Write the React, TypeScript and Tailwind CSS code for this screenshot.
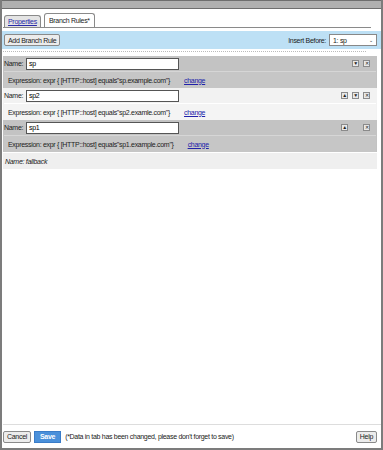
import React from "react";

type Rule = {name: string; host: string; up: boolean; down: boolean};

const rules: Rule[] = [
    {name: "sp", host: "sp.example.com", up: false, down: true},
    {name: "sp2", host: "sp2.examle.com", up: true, down: true},
    {name: "sp1", host: "sp1.example.com", up: true, down: false},
];

function IconBtn({glyph}: {glyph: string}) {
    return (
        <span className="flex h-[7px] w-[7px] items-center justify-center border border-[#8a8a8a] bg-[#e8e8e8] text-[5px] leading-none text-[#222]">
            {glyph}
        </span>
    );
}

function RuleBlock({rule, dark}: {rule: Rule; dark: boolean}) {
    const bg = dark ? "bg-[#c3c3c3]" : "bg-[#f2f2f2]";
    const exprBg = dark ? "bg-[#c6c6c6]" : "bg-[#f4f4f4]";
    return (
        <div className={bg}>
            <div className="flex h-[15px] items-center pl-[1px] pr-[7px]">
                <span className="w-[22px] text-[#222]">Name:</span>
                <div className="flex h-[12px] w-[153px] items-center border border-[#555] bg-white pl-[2px]">{rule.name}</div>
                <div className="ml-auto flex items-center gap-[4px]">
                    <span className="w-[7px]">{rule.up && <IconBtn glyph="▲"/>}</span>
                    <span className="w-[7px]">{rule.down && <IconBtn glyph="▼"/>}</span>
                    <IconBtn glyph="✕"/>
                </div>
            </div>
            <div className={`mx-[1px] flex h-[17px] items-center border-t ${dark ? "border-[#d6d6d6]" : "border-white"} ${exprBg} pl-[4px]`}>
                <span className="text-[#222]">Expression: expr {"{"} [HTTP::host] equals"{rule.host}"{"}"}</span>
                <a className="ml-[14px] text-[#2222aa] underline">change</a>
            </div>
        </div>
    );
}

export default function App() {
    return (
        <div className="flex h-[450px] w-[383px] flex-col border-x-2 border-b-2 border-[#7c7c7c] bg-white text-[7px] leading-none tracking-[-0.3px]" style={{fontFamily: '"Liberation Sans", Arial, sans-serif'}}>
            {/* barre de titre */}
            <div className="h-[9px] border-y border-[#6e6e6e] bg-[#b0b0b0]"/>

            {/* onglets */}
            <div className="ml-[1px] mr-[10px] mt-[5px] flex h-[14px] items-end border-b border-[#8a8a8a]">
                <div className="ml-[1px] flex h-[12px] items-center rounded-t-[3px] border border-b-0 border-[#8a8a8a] bg-[#e4e4e4] px-[3px] text-[#2a2aa8] underline">Properties</div>
                <div className="ml-[3px] flex h-[14px] items-center rounded-t-[3px] border border-b-0 border-[#8a8a8a] bg-white px-[4px] text-[#222]">Branch Rules*</div>
            </div>

            {/* barre d'outils */}
            <div className="mt-[3px] flex h-[18px] items-center bg-[#bde0f5] pl-[2px] pr-[4px]">
                <button className="flex h-[12px] items-center rounded-[2px] border border-[#8a8a8a] bg-[#ececec] px-[3px] text-[#222]">Add Branch Rule</button>
                <span className="ml-auto mr-[3px] text-[#222]">Insert Before:</span>
                <div className="flex h-[12px] w-[48px] items-center justify-between border border-[#888] bg-white pl-[3px] pr-[3px] text-[#222]">
                    <span>1: sp</span>
                    <span className="text-[5px]">⌄</span>
                </div>
            </div>
            <div className="ml-[1px] mr-[15px] mt-[2px] border-t border-dotted border-[#bbb]"/>

            {/* règles */}
            <div className="ml-[1px] mr-[4px] mt-[4px] flex flex-col">
                {rules.map((rule, index) => (
                    <RuleBlock key={rule.name} rule={rule} dark={index % 2 === 0}/>
                ))}
                <div className="mt-[1px] flex h-[16px] items-center bg-[#efefef] pl-[2px] italic text-[#222]">Name: fallback</div>
            </div>

            <div className="flex-1"/>

            {/* pied de page */}
            <div className="ml-[1px] flex h-[24px] items-center border-t border-[#ddd] pl-0 pr-[4px]">
                <button className="flex h-[12px] items-center rounded-[2px] border border-[#8a8a8a] bg-[#ececec] px-[3px] text-[#222]">Cancel</button>
                <button className="ml-[3px] flex h-[12px] items-center border border-[#3a7cc8] bg-[#4a90da] px-[5px] font-bold text-white">Save</button>
                <span className="ml-[4px] text-[#222]">(*Data in tab has been changed, please don't forget to save)</span>
                <button className="ml-auto flex h-[12px] items-center rounded-[2px] border border-[#8a8a8a] bg-[#ececec] px-[3px] text-[#222]">Help</button>
            </div>
        </div>
    );
}
